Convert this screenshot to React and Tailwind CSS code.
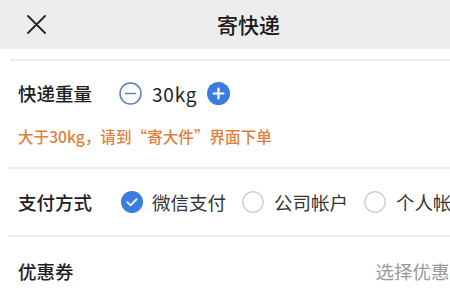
import React from "react";

const font = { fontFamily: '"Noto Sans CJK SC", "Noto Sans", sans-serif' };

function Radio({ checked }) {
  if (checked)
    return (
      <svg width="22" height="22" viewBox="0 0 22 22">
        <circle cx="11" cy="11" r="11" fill="#3a7ce0" />
        <path d="M6.3 11.2 L9.6 14.3 L15.7 8.2" fill="none" stroke="#fff" strokeWidth="1.8" strokeLinecap="round" strokeLinejoin="round" />
      </svg>
    );
  return (
    <svg width="22" height="22" viewBox="0 0 22 22">
      <circle cx="11" cy="11" r="10.2" fill="none" stroke="#cfcfcf" strokeWidth="1.4" />
    </svg>
  );
}

export default function App() {
  return (
    <div className="w-[450px] h-[300px] overflow-hidden bg-white" style={font}>
      <div className="h-[49px] bg-[#ededed] flex items-center">
        <svg className="ml-[27px]" width="19" height="19" viewBox="0 0 19 19">
          <path d="M1 1 L18 18 M18 1 L1 18" stroke="#222" strokeWidth="1.8" strokeLinecap="round" />
        </svg>
        <div className="ml-[171px] text-[21px] leading-none text-[#1a1a1a] font-medium whitespace-nowrap">寄快递</div>
      </div>
      <div className="h-[10px]" />
      <div className="ml-[10px] h-[2px] bg-[#ececec]" />
      <div className="h-[64px] flex items-center pl-[18px] whitespace-nowrap">
        <span className="text-[18.5px] leading-none text-[#1e1e1e] font-medium">快递重量</span>
        <svg className="ml-[27px]" width="23" height="23" viewBox="0 0 23 23">
          <circle cx="11.5" cy="11.5" r="10.5" fill="none" stroke="#5a7fb8" strokeWidth="1.5" />
          <path d="M6.5 11.5 H16.5" stroke="#5a7fb8" strokeWidth="1.5" strokeLinecap="round" />
        </svg>
        <span className="ml-[10px] text-[19px] tracking-[0.8px] leading-none text-[#222]">30kg</span>
        <svg className="ml-[10px]" width="23" height="23" viewBox="0 0 23 23">
          <circle cx="11.5" cy="11.5" r="11.5" fill="#3a7ce0" />
          <path d="M6.5 11.5 H16.5 M11.5 6.5 V16.5" stroke="#fff" strokeWidth="2.2" strokeLinecap="round" />
        </svg>
      </div>
      <div className="h-[24px] flex items-center pl-[18px] whitespace-nowrap">
        <span className="text-[15.6px] leading-none text-[#e0803a] font-medium">大于30kg，请到“寄大件”界面下单</span>
      </div>
      <div className="h-[18px]" />
      <div className="ml-[8px] h-[2px] bg-[#ececec]" />
      <div className="h-[66px] flex items-center pl-[18px] whitespace-nowrap">
        <span className="text-[18.5px] leading-none text-[#1e1e1e] font-medium">支付方式</span>
        <div className="ml-[29px]"><Radio checked /></div>
        <span className="ml-[9px] text-[18.5px] leading-none text-[#333]">微信支付</span>
        <div className="ml-[16px]"><Radio /></div>
        <span className="ml-[10px] text-[18.5px] leading-none text-[#333]">公司帐户</span>
        <div className="ml-[16px]"><Radio /></div>
        <span className="ml-[10px] text-[18.5px] leading-none text-[#333]">个人帐户</span>
      </div>
      <div className="ml-[8px] h-[2px] bg-[#ececec]" />
      <div className="h-[68px] flex items-center pl-[18px] whitespace-nowrap">
        <span className="text-[18.5px] leading-none text-[#1e1e1e] font-medium">优惠券</span>
        <span className="ml-[302px] text-[18.5px] leading-none text-[#9a9a9a]">选择优惠券</span>
      </div>
    </div>
  );
}
